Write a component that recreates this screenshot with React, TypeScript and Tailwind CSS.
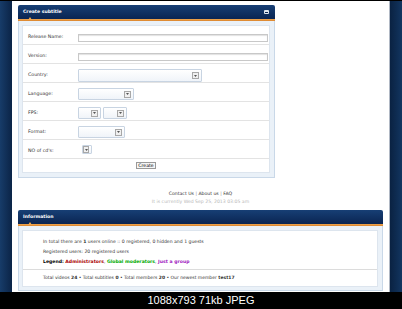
import React from "react";

function Arrow() {
  return (
    <div className="w-[7px] h-[7px] border border-[#a8a8a8] bg-[#f0f0f0] flex items-center justify-center">
      <svg width="3" height="2" viewBox="0 0 3 2">
        <path d="M0 0 L3 0 L1.5 2 Z" fill="#555" />
      </svg>
    </div>
  );
}

function Select({ className }: { className: string }) {
  return (
    <div
      className={
        "border border-[#c8d4e2] bg-gradient-to-b from-white to-[#f0f4f9] rounded-[1px] flex items-center justify-end pr-[2px] " +
        className
      }
    >
      <Arrow />
    </div>
  );
}

function Row({
  label,
  children,
}: {
  label: string;
  children: React.ReactNode;
}) {
  return (
    <div className="h-[19px] flex items-start border-b border-[#e3e3e3]">
      <div className="w-[55px] shrink-0 pl-[5px] pt-[8px] leading-[6px] text-[4.7px] text-[#333]">
        {label}
      </div>
      <div className="flex gap-[2px]">{children}</div>
    </div>
  );
}

function Header({ title, minus }: { title: string; minus?: boolean }) {
  return (
    <div className="relative">
      <div className="h-[14px] rounded-t-[2px] bg-gradient-to-b from-[#173f75] to-[#0a2552] flex items-center justify-between pl-[5px] pr-[6px]">
        <span className="text-white font-bold text-[4.6px] leading-[6px]">
          {title}
        </span>
        {minus && (
          <div className="w-[5px] h-[4px] rounded-[1px] bg-[#dfe6ef] flex items-center justify-center">
            <div className="w-[3px] h-[1px] bg-[#0a2552]" />
          </div>
        )}
      </div>
      <div className="h-[2px] bg-gradient-to-b from-[#f0a850] to-[#d9822a]" />
      <div className="absolute left-[10px] top-[12px] w-0 h-0 border-l-[2px] border-r-[2px] border-b-[3px] border-l-transparent border-r-transparent border-b-[#f0a850]" />
    </div>
  );
}

export default function App() {
  return (
    <div className="w-[402px] h-[309px] flex flex-col bg-black overflow-hidden font-['DejaVu_Sans',Verdana,sans-serif]">
      <div className="h-[292px] flex border-t border-black">
        <div className="w-[12px] bg-gradient-to-r from-[#173c69] to-[#0b2447]" />
        <div className="flex-1 bg-white flex flex-col pl-[6px] pt-[4px]">
          {/* Create subtitle panel */}
          <div className="w-[257px] flex flex-col">
            <Header title="Create subtitle" minus />
            <div className="h-[157px] bg-[#eaf1f8] border-x border-b border-[#c9d8e8] pl-[3px] pr-[4px] pt-[4px]">
              <div className="bg-white border border-[#dde5ee] h-[148px] flex flex-col">
                <Row label="Release Name:">
                  <div className="mt-[8px] w-[190px] h-[8px] border border-[#c8c8c8] bg-white shadow-[inset_0_1px_1px_#e2e2e2]" />
                </Row>
                <Row label="Version:">
                  <div className="mt-[8px] w-[190px] h-[8px] border border-[#c8c8c8] bg-white shadow-[inset_0_1px_1px_#e2e2e2]" />
                </Row>
                <Row label="Country:">
                  <Select className="mt-[5px] w-[124px] h-[13px]" />
                </Row>
                <Row label="Language:">
                  <Select className="mt-[5px] w-[56px] h-[12px]" />
                </Row>
                <Row label="FPS:">
                  <Select className="mt-[5px] w-[23px] h-[12px]" />
                  <Select className="mt-[5px] w-[24px] h-[12px]" />
                </Row>
                <Row label="Format:">
                  <Select className="mt-[5px] w-[47px] h-[12px]" />
                </Row>
                <Row label="NO of cd's:">
                  <div className="pl-[4px]">
                    <Select className="mt-[5px] w-[10px] h-[9px]" />
                  </div>
                </Row>
                <div className="flex-1 flex items-center justify-center">
                  <div className="border border-[#999] bg-[#f6f6f6] px-[1px] h-[7px] leading-[6px] text-[4.6px] text-black">
                    Create
                  </div>
                </div>
              </div>
            </div>
          </div>

          {/* footer */}
          <div className="w-[377px] -ml-[6px] mt-[12px] flex flex-col items-center text-[4.6px] leading-[8px]">
            <div className="text-[#333]">
              Contact Us <span className="text-[#999]">|</span> About us{" "}
              <span className="text-[#999]">|</span> FAQ
            </div>
            <div className="text-[#b8b8b8]">
              It is currently Wed Sep 25, 2013 03:05 am
            </div>
          </div>

          {/* Information panel */}
          <div className="w-[365px] mt-[4px] flex flex-col">
            <Header title="Information" />
            <div className="h-[65px] bg-[#eaf1f8] border-x border-b border-[#c9d8e8] pl-[3px] pr-[4px] pt-[4px]">
              <div className="bg-white border border-[#dde5ee] h-[57px] flex flex-col text-[#333]">
                <div className="h-[39px] border-b border-[#dcdcdc] pl-[20px] pt-[6px] leading-[10px] text-[4.6px]">
                  <div>
                    In total there are <b>1</b> users online :: 0 registered, 0
                    hidden and 1 guests
                  </div>
                  <div>Registered users: 20 registered users</div>
                  <div>
                    <b className="text-black">Legend:</b>{" "}
                    <b className="text-[#aa0000]">Administrators</b>,{" "}
                    <b className="text-[#00aa00]">Global moderators</b>,{" "}
                    <b className="text-[#a020c0]">Just a group</b>
                  </div>
                </div>
                <div className="flex-1 pl-[20px] flex items-center text-[4.5px]">
                  <div>
                    Total videos <b>24</b> • Total subtitles <b>0</b> • Total
                    members <b>20</b> • Our newest member <b>test17</b>
                  </div>
                </div>
              </div>
            </div>
          </div>
        </div>
        <div className="w-[13px] border-l border-[#b0b8c4] bg-gradient-to-r from-[#0a2242] to-[#123560]" />
      </div>
      <div className="h-[17px] flex items-center justify-center text-white text-[11px] font-['Liberation_Sans',Arial,sans-serif]">
        1088x793 71kb JPEG
      </div>
    </div>
  );
}
